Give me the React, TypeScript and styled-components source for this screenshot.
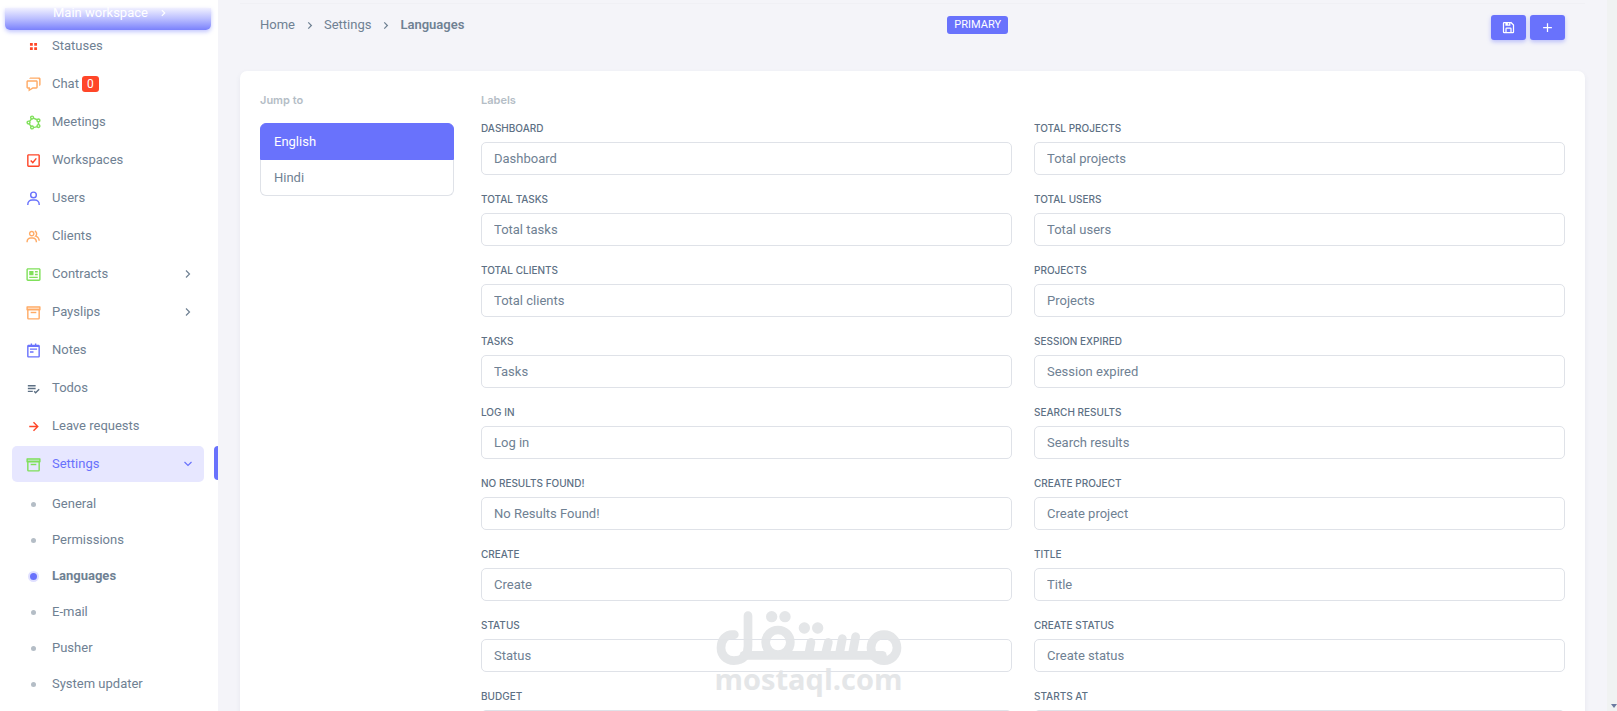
import React from "react";
import styled, { createGlobalStyle } from "styled-components";
import {
  BiGridSmall,
  BiChat,
  BiShapePolygon,
  BiCheckSquare,
  BiUser,
  BiGroup,
  BiNews,
  BiNotepad,
  BiListCheck,
  BiRightArrowAlt,
  BiChevronRight,
  BiSave,
  BiPlus,
} from "react-icons/bi";

const color = {
  primary: "#6972fc",
  danger: "#ff4628",
  warning: "#ffab66",
  success: "#7fe05a",
  text: "#6f8193",
  heading: "#5d7084",
  muted: "#b4bdc6",
  border: "#dfe2e8",
};

const GlobalStyle = createGlobalStyle`
  *, *::before, *::after { box-sizing: border-box; }
  body {
    margin: 0;
    background: #f4f4f9;
    color: ${color.text};
    font-family: Roboto, "Liberation Sans", sans-serif;
    font-size: 13px;
    line-height: 20px;
  }
  a { color: inherit; text-decoration: none; }
  ul, ol { list-style: none; margin: 0; padding: 0; }
  button, input { font: inherit; color: inherit; }
`;

const Page = styled.div`
  display: flex;
  height: 100vh;
  overflow: hidden;
  position: relative;
`;

const Sidebar = styled.aside`
  flex: 0 0 218px;
  background: #fff;
  padding-top: 8px;
  overflow: hidden;
`;

const WorkspaceButton = styled.button`
  display: flex;
  align-items: flex-start;
  gap: 8px;
  width: 206px;
  height: 22px;
  margin: 0 0 0 5px;
  padding: 0 0 0 48px;
  border: 0;
  border-radius: 0 0 5px 5px;
  background: linear-gradient(#f0f0ff, #b9bdff 50%, #7a81fc);
  box-shadow: 0 2px 4px rgba(105, 114, 252, 0.4);
  color: #fff;
  line-height: 10px;
  svg { margin-top: -2px; }
`;

const Menu = styled.ul`
  display: flex;
  flex-direction: column;
  gap: 2px;
  margin-top: -2px;
`;

const MenuEntry = styled.li`
  position: relative;
`;

const MenuLink = styled.a<{ $active?: boolean }>`
  display: flex;
  align-items: center;
  height: 36px;
  margin: 0 14px 0 12px;
  padding: 0 13px;
  border-radius: 5px;
  background: ${(p) => (p.$active ? "#e7e7ff" : "transparent")};
  color: ${(p) => (p.$active ? color.primary : color.text)};
`;

const MenuIcon = styled.span<{ $color: string }>`
  display: flex;
  width: 27px;
  font-size: 17px;
  color: ${(p) => p.$color};
`;

const Caret = styled.svg<{ $open?: boolean }>`
  width: 8px;
  height: 8px;
  margin-left: auto;
  margin-right: -1px;
  fill: none;
  stroke: currentColor;
  stroke-width: 1.2;
  transform: ${(p) => (p.$open ? "rotate(90deg)" : "none")};
`;

const ActiveBar = styled.span`
  position: absolute;
  right: 0;
  top: 0;
  width: 4px;
  height: 34px;
  border-radius: 4px 0 0 4px;
  background: ${color.primary};
`;

const Count = styled.span`
  margin-left: 3px;
  padding: 0 5px;
  border-radius: 3px;
  background: ${color.danger};
  color: #fff;
  font-size: 12px;
  line-height: 16px;
`;

const SubMenu = styled.ul`
  padding-top: 4px;
`;

const SubLink = styled.a<{ $active?: boolean }>`
  display: flex;
  align-items: center;
  height: 36px;
  padding-left: 28px;
  font-weight: ${(p) => (p.$active ? 700 : 400)};
`;

const Bullet = styled.span<{ $active?: boolean }>`
  width: ${(p) => (p.$active ? 11 : 5)}px;
  height: ${(p) => (p.$active ? 11 : 5)}px;
  margin: 0 ${(p) => (p.$active ? 13 : 16)}px 0 ${(p) => (p.$active ? 0 : 3)}px;
  border-radius: 50%;
  border: ${(p) => (p.$active ? "2px solid #e0e0ff" : "0")};
  background: ${(p) => (p.$active ? color.primary : color.muted)};
`;

const Main = styled.main`
  flex: 1;
  min-width: 0;
  padding: 3px 22px 0;
`;

const TopBar = styled.header`
  display: flex;
  align-items: flex-start;
  justify-content: space-between;
  height: 68px;
  padding: 11px 20px 0;
  border-top: 1px solid #f0f0f5;
`;

const Breadcrumb = styled.ol`
  display: flex;
  align-items: center;
`;

const Crumb = styled.li<{ $current?: boolean }>`
  display: flex;
  align-items: center;
  font-weight: ${(p) => (p.$current ? 600 : 400)};
  svg {
    width: 15px;
    height: 15px;
    margin: 0 7px;
  }
`;

const Badge = styled.span`
  margin-top: 1px;
  padding: 0 7px;
  border-radius: 3px;
  background: ${color.primary};
  color: #fff;
  font-size: 11px;
  line-height: 18px;
`;

const Actions = styled.div`
  display: flex;
  gap: 4px;
`;

const ActionButton = styled.button`
  display: flex;
  align-items: center;
  justify-content: center;
  width: 35px;
  height: 25px;
  padding: 0;
  border: 0;
  border-radius: 3px;
  background: ${color.primary};
  box-shadow: 0 2px 4px rgba(105, 114, 252, 0.4);
  color: #fff;
  font-size: 15px;
`;

const Card = styled.section`
  display: grid;
  grid-template-columns: 194px minmax(0, 1fr);
  column-gap: 27px;
  align-items: start;
  padding: 19px 20px;
  border-radius: 7px;
  background: #fff;
  box-shadow: 0 2px 5px rgba(67, 89, 113, 0.08);
`;

const Caption = styled.h2`
  margin: 0;
  color: ${color.muted};
  font-size: 11px;
  font-weight: 600;
  font-family: Inter, "Liberation Sans", sans-serif;
  line-height: 20px;
`;

const LanguageList = styled.nav`
  display: flex;
  flex-direction: column;
  margin-top: 13px;
`;

const LanguageLink = styled.a<{ $active?: boolean }>`
  padding: 8px 13px 7px;
  border: 1px solid ${(p) => (p.$active ? color.primary : color.border)};
  background: ${(p) => (p.$active ? color.primary : "#fff")};
  color: ${(p) => (p.$active ? "#fff" : color.text)};
  &:first-child { border-radius: 6px 6px 0 0; }
  &:last-child { border-top: 0; border-radius: 0 0 6px 6px; }
`;

const FieldGrid = styled.div`
  display: grid;
  grid-template-columns: repeat(2, minmax(0, 1fr));
  gap: 17px 22px;
  margin-top: 11px;
`;

const Field = styled.div`
  display: flex;
  flex-direction: column;
  gap: 6px;
`;

const FieldLabel = styled.label`
  color: ${color.heading};
  font-family: Inter, "Liberation Sans", sans-serif;
  font-size: 10px;
  font-weight: 500;
  line-height: 15px;
  text-transform: uppercase;
`;

const TextInput = styled.input`
  width: 100%;
  height: 33px;
  padding: 0 12px;
  border: 1px solid ${color.border};
  border-radius: 5px;
  background: #fff;
`;

const ScrollTrack = styled.div`
  display: flex;
  flex: 0 0 10px;
  align-items: flex-end;
  justify-content: flex-end;
  padding-bottom: 3px;
  background: #f0f2f2;
`;

const Watermark = styled.div`
  position: absolute;
  left: 50%;
  bottom: 20px;
  width: 190px;
  transform: translateX(-50%);
  color: #e3e5e7;
  opacity: 0.95;
  text-align: center;
  pointer-events: none;
  svg { display: block; }
`;

const WatermarkName = styled.div`
  font-family: "Open Sans", sans-serif;
  font-size: 29px;
  font-weight: 700;
  line-height: 24px;
`;

function BoxIcon() {
  return (
    <svg width="1em" height="1em" viewBox="0 0 24 24" fill="currentColor" aria-hidden="true">
      <path fillOpacity="0.5" d="M3 4h18v3H3z" />
      <path d="M21 3H3a1 1 0 0 0-1 1v4a1 1 0 0 0 1 1v11a2 2 0 0 0 2 2h14a2 2 0 0 0 2-2V9a1 1 0 0 0 1-1V4a1 1 0 0 0-1-1zM4 5h16v2H4V5zm15 15H5V9h14v11z" />
      <path d="M8 11h8v2H8z" />
    </svg>
  );
}

function MenuCaret({ open }: { open?: boolean }) {
  return (
    <Caret $open={open} viewBox="0 0 8 8" aria-hidden="true">
      <path d="M2 0.5L5.5 4L2 7.5" />
    </Caret>
  );
}

const navItems = [
  { label: "Statuses", icon: BiGridSmall, tint: color.danger },
  { label: "Chat", icon: BiChat, tint: color.warning, count: 0 },
  { label: "Meetings", icon: BiShapePolygon, tint: color.success },
  { label: "Workspaces", icon: BiCheckSquare, tint: color.danger },
  { label: "Users", icon: BiUser, tint: color.primary },
  { label: "Clients", icon: BiGroup, tint: color.warning },
  { label: "Contracts", icon: BiNews, tint: color.success, caret: true },
  { label: "Payslips", icon: BoxIcon, tint: color.warning, caret: true },
  { label: "Notes", icon: BiNotepad, tint: color.primary },
  { label: "Todos", icon: BiListCheck, tint: color.heading },
  { label: "Leave requests", icon: BiRightArrowAlt, tint: color.danger },
];

const settingsItems = ["General", "Permissions", "Languages", "E-mail", "Pusher", "System updater"];

const labels = [
  "Dashboard", "Total projects",
  "Total tasks", "Total users",
  "Total clients", "Projects",
  "Tasks", "Session expired",
  "Log in", "Search results",
  "No Results Found!", "Create project",
  "Create", "Title",
  "Status", "Create status",
  "Budget", "Starts at",
];

function LogoMark() {
  return (
    <svg width="190" height="58" viewBox="70 60 570 174" fill="none" stroke="currentColor" strokeWidth="26" strokeLinecap="round" aria-hidden="true">
      <path d="M131 137C104 134 91 155 91 177c0 22 17 38 39 38 28 0 42-18 42-43V80" />
      <path d="M160 199H575" />
      <circle cx="262" cy="160" r="37" />
      <circle cx="580" cy="176" r="39" />
      <path d="M361 160l-7 36M413 160l-9 36M455 149l-9 47M495 143l-10 53" />
      <g fill="currentColor" stroke="none">
        <circle cx="243" cy="83" r="17" />
        <circle cx="283" cy="83" r="17" />
        <circle cx="341" cy="117" r="17" />
        <circle cx="381" cy="117" r="17" />
      </g>
    </svg>
  );
}

export default function App() {
  return (
    <Page>
      <GlobalStyle />
      <Sidebar>
        <WorkspaceButton type="button">
          Main workspace <BiChevronRight size={14} />
        </WorkspaceButton>
        <Menu>
          {navItems.map(({ label, icon: Icon, tint, count, caret }) => (
            <MenuEntry key={label}>
              <MenuLink href="#">
                <MenuIcon $color={tint}><Icon /></MenuIcon>
                {label}
                {count !== undefined && <Count>{count}</Count>}
                {caret && <MenuCaret />}
              </MenuLink>
            </MenuEntry>
          ))}
          <MenuEntry>
            <MenuLink href="#" $active>
              <MenuIcon $color={color.success}><BoxIcon /></MenuIcon>
              Settings
              <MenuCaret open />
            </MenuLink>
            <ActiveBar />
            <SubMenu>
              {settingsItems.map((name) => (
                <li key={name}>
                  <SubLink href="#" $active={name === "Languages"}>
                    <Bullet $active={name === "Languages"} />
                    {name}
                  </SubLink>
                </li>
              ))}
            </SubMenu>
          </MenuEntry>
        </Menu>
      </Sidebar>
      <Main>
        <TopBar>
          <Breadcrumb>
            <Crumb><a href="#">Home</a><BiChevronRight /></Crumb>
            <Crumb><a href="#">Settings</a><BiChevronRight /></Crumb>
            <Crumb $current>Languages</Crumb>
          </Breadcrumb>
          <Badge>PRIMARY</Badge>
          <Actions>
            <ActionButton type="button" aria-label="Save"><BiSave /></ActionButton>
            <ActionButton type="button" aria-label="Add language"><BiPlus /></ActionButton>
          </Actions>
        </TopBar>
        <Card>
          <div>
            <Caption>Jump to</Caption>
            <LanguageList>
              <LanguageLink href="#" $active>English</LanguageLink>
              <LanguageLink href="#">Hindi</LanguageLink>
            </LanguageList>
          </div>
          <div>
            <Caption>Labels</Caption>
            <FieldGrid>
              {labels.map((name) => {
                const id = name.toLowerCase().replace(/[^a-z]+/g, "-");
                return (
                  <Field key={id}>
                    <FieldLabel htmlFor={id}>{name}</FieldLabel>
                    <TextInput id={id} type="text" defaultValue={name} />
                  </Field>
                );
              })}
            </FieldGrid>
          </div>
        </Card>
      </Main>
      <ScrollTrack>
        <svg width="6" height="4" viewBox="0 0 6 4" aria-hidden="true">
          <path d="M0 0h6L3 4z" fill="#6b7aa0" />
        </svg>
      </ScrollTrack>
      <Watermark>
        <LogoMark />
        <WatermarkName>mostaql.com</WatermarkName>
      </Watermark>
    </Page>
  );
}
